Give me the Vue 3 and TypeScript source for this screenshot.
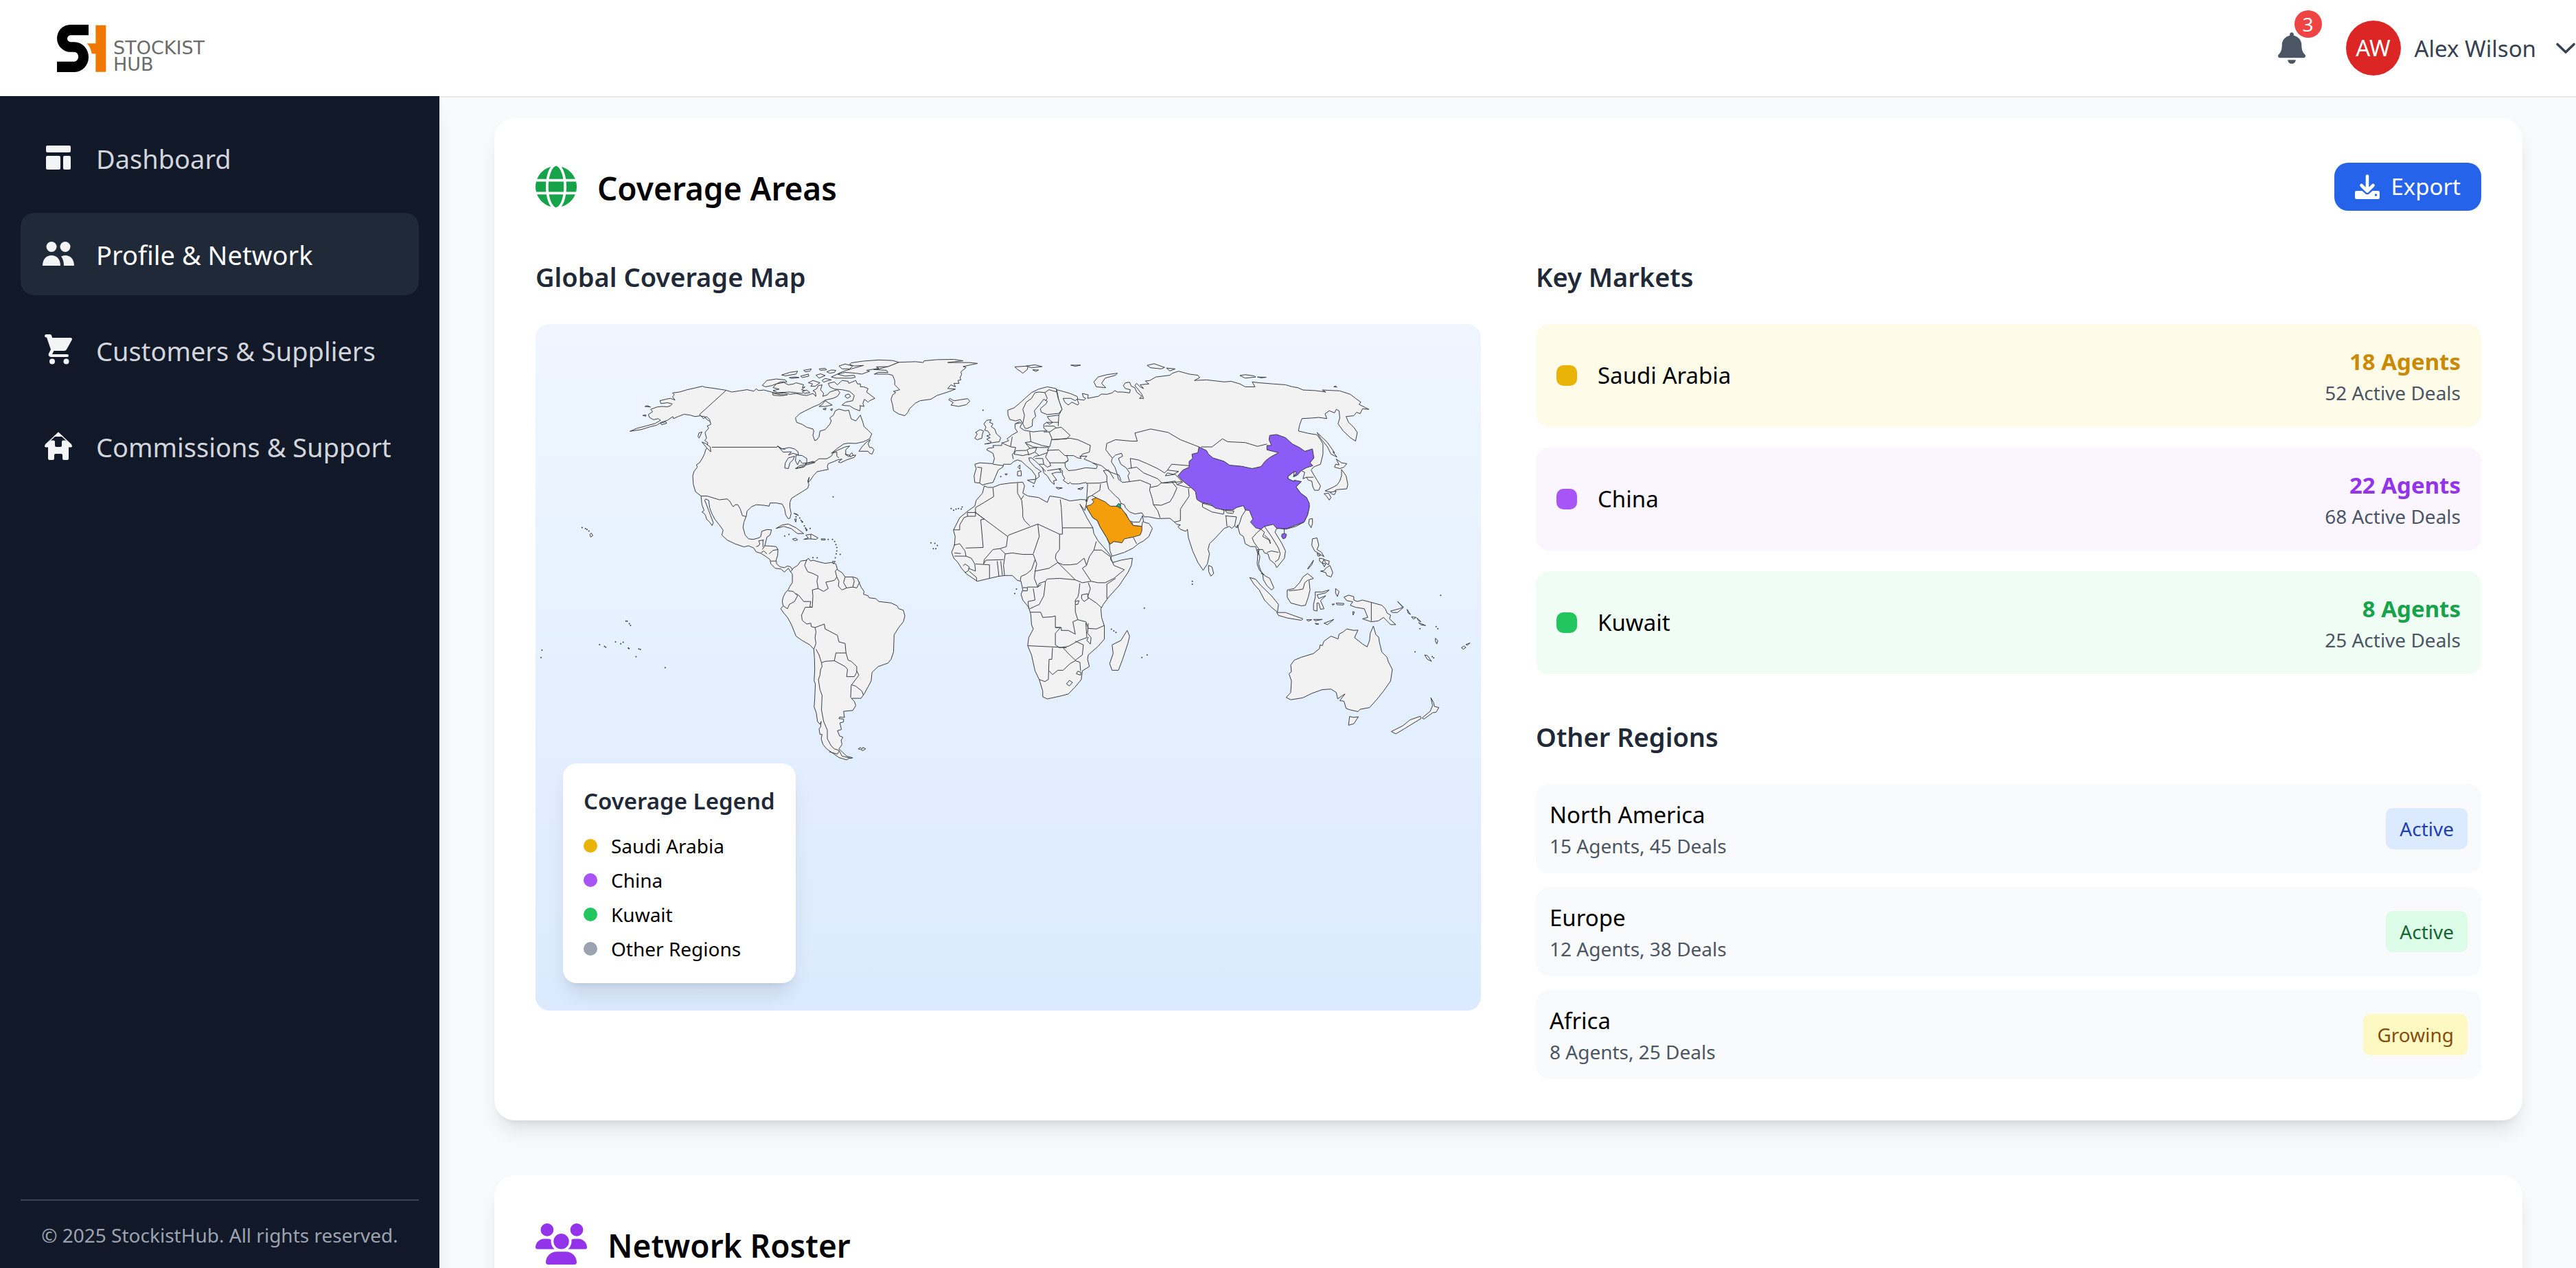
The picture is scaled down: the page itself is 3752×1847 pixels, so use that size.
<script setup lang="ts">
interface NavItem { label: string; icon: 'dashboard' | 'people' | 'cart' | 'house'; active?: boolean }
interface Market { name: string; agents: number; deals: number; tone: string }
interface Region { name: string; agents: number; deals: number; status: string; tone: string }

const nav: NavItem[] = [
  { label: 'Dashboard', icon: 'dashboard' },
  { label: 'Profile & Network', icon: 'people', active: true },
  { label: 'Customers & Suppliers', icon: 'cart' },
  { label: 'Commissions & Support', icon: 'house' },
]

const markets: Market[] = [
  { name: 'Saudi Arabia', agents: 18, deals: 52, tone: 'yellow' },
  { name: 'China', agents: 22, deals: 68, tone: 'purple' },
  { name: 'Kuwait', agents: 8, deals: 25, tone: 'green' },
]

const regions: Region[] = [
  { name: 'North America', agents: 15, deals: 45, status: 'Active', tone: 'blue' },
  { name: 'Europe', agents: 12, deals: 38, status: 'Active', tone: 'green' },
  { name: 'Africa', agents: 8, deals: 25, status: 'Growing', tone: 'yellow' },
]

const legend = [
  { label: 'Saudi Arabia', tone: 'yellow' },
  { label: 'China', tone: 'purple' },
  { label: 'Kuwait', tone: 'green' },
  { label: 'Other Regions', tone: 'gray' },
]

// Western hemisphere coastlines
const westLand: string[] = [
  // North and Central America
  '308,376 330,366 362,357 390,349 408,338 400,332 385,336 372,328 368,318 382,308 376,300 396,292 412,290 430,291 440,288 446,281 430,277 409,280 406,270 425,265 440,262 455,268 447,256 453,250 447,243 470,240 495,232 520,226 545,220 552,223 580,227 605,231 622,234 640,240 665,236 690,232 712,237 720,229 728,235 745,233 770,240 790,245 810,243 830,248 850,245 868,250 885,252 905,245 915,255 913,240 905,236 918,228 922,218 935,215 930,232 940,245 937,255 952,250 960,240 975,235 985,232 993,242 985,255 970,262 945,268 925,283 905,292 880,305 862,315 848,330 852,345 870,352 885,362 905,368 908,375 905,390 911,408 918,405 925,395 928,375 945,370 960,352 965,340 960,330 972,320 978,305 990,299 1010,305 1022,303 1025,315 1030,333 1045,340 1060,320 1068,345 1072,360 1085,372 1097,385 1090,402 1070,412 1045,418 1020,417 1005,420 985,435 965,452 985,442 1010,430 1025,427 1012,440 1012,455 1025,462 1045,458 1040,466 1015,475 995,485 988,482 1000,472 985,475 975,480 955,488 952,498 955,508 935,512 918,516 908,528 903,535 895,548 890,552 893,535 888,548 892,560 888,573 870,585 850,598 835,608 830,622 830,640 834,660 830,677 824,678 816,665 813,645 805,628 785,624 765,624 762,635 745,632 720,630 705,637 690,652 688,668 680,690 677,708 684,735 695,748 710,750 728,745 735,740 738,722 755,716 770,717 765,735 755,742 752,755 748,772 765,773 785,775 791,785 790,805 785,822 787,835 798,845 812,848 822,842 832,845 838,855 832,862 825,850 812,863 800,852 782,850 768,835 765,820 750,808 735,798 720,793 712,780 695,772 680,776 650,765 625,752 608,735 612,718 600,700 585,680 575,660 568,640 565,615 555,610 552,615 558,630 565,650 572,670 580,692 576,702 568,690 558,680 555,668 550,660 543,655 550,650 543,630 540,600 522,585 515,560 513,530 517,515 528,500 525,492 535,485 545,468 552,452 555,440 560,432 562,415 552,408 558,400 553,380 565,365 560,358 572,352 568,335 558,325 548,332 540,322 520,325 505,320 485,317 465,325 450,332 448,325 430,338 410,345 395,355 375,360 345,370',
  // South America
  '838,855 832,862 838,870 838,900 830,912 824,925 815,935 808,950 805,965 808,980 800,990 810,1005 822,1020 835,1045 850,1085 870,1100 895,1115 908,1130 910,1160 911,1200 909,1240 913,1250 911,1300 909,1330 916,1350 920,1380 928,1390 932,1380 930,1400 925,1405 928,1425 935,1425 932,1440 938,1460 950,1475 970,1490 990,1505 1015,1513 1022,1508 1035,1506 1015,1500 1000,1485 990,1475 1000,1460 997,1445 1003,1435 992,1430 985,1412 998,1408 993,1385 1005,1382 1005,1372 990,1370 992,1365 1008,1366 1005,1345 1035,1342 1045,1325 1040,1310 1030,1300 1050,1300 1062,1300 1072,1285 1085,1260 1095,1240 1098,1210 1118,1190 1150,1178 1160,1165 1168,1140 1170,1080 1185,1055 1200,1035 1205,1015 1200,995 1185,990 1180,980 1160,970 1120,965 1110,955 1088,952 1085,945 1070,940 1072,930 1062,915 1058,905 1050,885 1035,880 1010,880 1000,865 985,855 980,835 965,830 945,833 925,828 905,822 897,825 890,815 885,822 865,825 855,840 840,850',
  // Greenland
  '1105,178 1150,178 1165,182 1172,200 1172,215 1188,232 1168,238 1175,242 1165,250 1160,265 1165,285 1168,305 1185,316 1205,322 1215,310 1220,298 1240,278 1255,270 1290,265 1310,252 1345,240 1370,230 1345,228 1355,215 1370,222 1365,210 1382,210 1378,200 1388,198 1385,190 1390,180 1388,170 1405,155 1395,152 1420,146 1442,141 1415,138 1345,138 1395,132 1365,127 1310,128 1268,132 1265,138 1240,135 1185,137 1150,152 1120,160 1103,162 1145,165 1150,172 1118,172',
  // Ellesmere and Axel Heiberg
  '985,178 1010,172 1045,175 1065,178 1090,168 1080,165 1120,158 1112,153 1150,152 1185,137 1165,131 1120,129 1070,133 1030,139 1025,145 1040,150 1070,148 1030,160 1000,170',
  '990,150 1010,143 1035,150 1025,160 1000,160',
  // Baffin Island
  '955,210 975,205 985,215 1000,200 1020,203 1022,210 1045,200 1050,212 1060,212 1060,222 1070,222 1085,228 1080,240 1095,252 1107,262 1090,270 1085,275 1073,265 1068,280 1072,290 1058,287 1060,292 1058,305 1040,298 1025,288 1010,287 1000,285 1012,275 1035,270 1040,252 1025,238 1000,232 975,230 960,222',
  '1012,250 1022,247 1028,255 1018,262 1010,256',
  '925,290 935,283 945,270 960,280 968,285 945,290',
  '938,299 948,295 946,302', '962,300 969,298 966,305',
  // Arctic archipelago
  '740,217 755,200 785,195 815,198 820,205 800,205 785,212 770,218 750,222',
  '785,212 775,225 795,230 775,235 790,242 830,240 870,245 880,235 868,232 880,222 870,225 875,215 850,208 842,212 825,215 810,207',
  '773,244 800,249 822,250 800,253 775,251', '870,238 885,233 895,242 878,245',
  '803,181 830,172 855,168 850,178 815,184', '865,185 890,178 892,185 870,190',
  '875,165 900,160 895,168 880,170', '828,190 848,188 860,190 835,193',
  '915,182 930,177 945,183 925,192', '925,160 945,158 950,163 930,165', '950,170 965,164 980,165 975,172 960,175',
  '890,208 905,200 928,208 912,220 898,220 904,212', '935,200 945,193 965,198 950,202 940,206',
  '965,188 985,178 1010,185 1040,182 1043,189 1030,192 980,192',
  // Newfoundland and Pacific coast islands
  '1092,405 1078,415 1065,430 1055,445 1085,445 1090,452 1098,455 1104,440 1098,432 1090,432 1085,420',
  '543,413 555,418 570,430 572,447 560,435', '530,395 533,382 543,378 538,390 534,399',
  '407,348 425,343 428,348 412,353', '357,290 365,287 375,292', '350,321 360,319 360,324',
  '1010,455 1028,460 1022,464', '1025,458 1032,450 1036,458 1028,465',
  // Caribbean
  '785,712 805,700 825,697 850,710 875,730 855,730 845,722 835,713 810,705', '838,749 850,746 855,752 845,754',
  '882,735 900,732 922,745 915,750 895,748 875,750 890,745', '932,748 945,748 945,752 933,752',
  '843,660 852,662 858,668', '845,680 851,679 849,690', '865,682 873,690 868,688', '880,708 887,718 881,715', '969,826 978,826 972,835',
  // Hawaii, Iceland, Falklands
  '177,733 182,728 187,737 180,742', '1348,267 1352,262 1360,268 1368,270 1385,267 1410,263 1417,272 1405,284 1380,290 1355,285 1363,277',
  '1053,1475 1060,1470 1065,1476 1068,1470 1077,1475 1068,1481 1060,1477',
]

const westBorders: string[] = [
  '575,431 788,431 790,427 800,436 815,438', '622,234 535,318 540,324 552,325 556,332 568,342',
  '540,600 560,600 600,613 625,610 634,618 640,630 645,637 652,630 660,630 668,645 675,668 688,671',
  '850,505 880,495 885,487 910,482 925,471 950,471 965,462 972,450 983,448 983,462 990,468',
  '885,820 878,840 888,862 905,868 922,877 918,895 920,905 922,920', '922,920 940,930 955,920 947,898 975,892 983,880 978,860 985,852',
  '983,880 990,895 988,912 1000,925 1015,918 1005,900 1010,880', '1015,918 1035,915 1040,895 1035,882', '1035,915 1048,918 1058,897',
  '922,920 903,925 905,945 903,985 895,983 898,965 875,965 860,945 850,937', '824,928 840,930 855,945 845,965 828,975 822,990 808,980',
  '903,985 880,985 868,1012 870,1030 885,1043 898,1040 900,1052 912,1055 942,1043 945,1060 985,1082 990,1105 1010,1110 1013,1143 980,1143 975,1170 945,1172 933,1177 925,1150 915,1130',
  '912,1055 915,1070 912,1090 915,1110 908,1130', '975,1170 1010,1190 1018,1200 1015,1225 1040,1225 1048,1210 1048,1190 1030,1172 1020,1168 1013,1143',
  '1048,1205 1055,1220 1030,1255 1028,1298', '1030,1253 1045,1258 1065,1275 1070,1290',
  '933,1177 935,1190 930,1200 928,1220 923,1235 928,1270 935,1290 933,1340 940,1380 952,1410 952,1440 965,1465 975,1475 990,1480 1000,1500 1030,1508',
  '958,1485 985,1493 990,1483', '720,775 728,772 732,765 728,755 745,752', '742,752 742,776', '736,796 745,790 755,800', '748,772 740,785', '762,800 775,788 791,785', '768,825 785,825', '898,733 898,750',
]

const lakes: string[] = [
  '790,427 805,437 828,432 845,437 856,446 858,458 840,452 825,458 835,447 808,448', '845,462 825,468 815,485 813,503 825,505 830,485 840,475',
  '850,458 870,460 885,470 885,485 870,487 862,475 855,492 848,478', '848,505 862,495 885,490 875,500', '880,488 905,480 912,484 885,492',
]

// Eastern hemisphere coastlines
const eastLand: string[] = [
  // Eurasian mainland
  '92,555 78,553 76,530 82,505 78,490 92,485 130,488 134,470 130,452 112,440 115,435 132,432 130,425 140,425 155,425 155,417 165,413 175,408 170,402 185,388 200,378 193,365 193,350 205,343 212,350 207,362 218,372 245,378 265,375 285,375 275,365 275,352 283,345 292,352 300,345 290,335 285,325 318,320 327,300 318,270 312,232 330,238 350,245 370,255 372,262 365,270 352,262 330,262 335,275 345,285 355,275 372,285 375,280 370,265 390,268 395,262 388,258 385,245 402,250 400,262 430,255 440,247 455,248 470,243 478,235 485,240 500,240 520,243 522,232 508,228 502,218 508,208 520,206 525,220 535,225 540,240 555,255 548,262 560,262 555,248 545,232 535,218 540,210 550,222 560,228 550,215 575,212 565,202 578,200 595,188 635,182 642,175 660,168 690,178 715,182 720,190 705,200 740,198 790,205 810,203 835,212 850,222 878,222 870,205 890,208 930,212 965,215 985,222 1000,225 1015,233 1050,235 1080,240 1070,233 1120,236 1150,248 1165,262 1180,275 1175,283 1203,300 1185,298 1178,315 1168,310 1160,322 1138,325 1145,345 1160,362 1170,380 1165,410 1150,398 1130,375 1115,350 1120,330 1118,305 1110,300 1105,312 1090,305 1078,315 1083,332 1060,328 1040,330 1012,332 1005,355 1002,375 1030,383 1055,388 1065,405 1072,420 1072,455 1065,490 1050,497 1045,500 1038,510 1045,525 1055,545 1065,565 1060,580 1048,580 1043,568 1040,548 1030,545 1025,535 1015,540 1020,518 1010,512 998,528 988,533 990,515 972,532 972,540 990,550 1010,550 995,568 1008,590 1025,605 1033,635 1028,665 1018,690 995,705 965,715 950,712 940,712 935,725 955,765 965,790 962,815 940,848 935,835 920,820 915,800 905,797 900,785 885,785 892,810 888,835 895,860 905,875 920,885 932,918 925,925 912,910 902,890 900,870 890,855 884,835 886,800 880,775 865,775 850,765 845,740 835,732 832,720 828,700 825,710 820,702 812,712 805,705 790,712 780,725 765,745 748,765 744,785 748,800 742,835 730,857 715,830 700,790 688,745 685,715 680,722 665,715 658,706 665,700 655,698 648,690 635,677 600,678 575,672 562,672 555,658 535,662 520,655 508,640 505,630 495,625 490,643 510,662 518,685 530,690 548,690 557,668 560,690 575,695 585,712 575,740 560,755 545,765 530,780 505,795 470,808 464,790 462,765 455,745 435,705 428,685 415,675 400,645 395,635 398,600 400,560 395,553 375,558 355,558 350,553 345,558 330,545 335,540 328,525 328,512 318,505 325,518 310,518 305,520 298,522 312,545 303,547 305,560 295,550 285,530 275,520 272,505 265,495 250,478 240,468 232,468 235,480 250,500 268,515 260,520 262,533 252,542 252,530 240,510 225,495 212,480 200,475 190,480 180,490 160,490 158,500 145,510 138,530 130,553 110,558 100,562',
  // Scandinavia
  '222,366 215,350 208,335 195,340 178,335 173,320 172,303 190,295 205,280 225,258 240,242 260,230 285,222 310,228 312,240 316,262 327,300 318,314 285,318 268,310 265,298 282,280 285,272 275,265 262,285 248,305 252,325 243,335 242,358 228,366',
  // British Isles
  '106,420 120,418 125,412 120,410 112,403 122,398 112,392 122,388 115,375 106,372 110,362 104,350 112,338 125,336 120,345 130,350 125,360 135,368 140,385 152,398 148,412 130,415', '78,400 85,385 80,380 93,370 103,375 100,385 98,400 85,405',
  // Arctic Ocean islands
  '192,153 230,150 228,162 215,175 208,168 200,162', '225,150 250,146 270,152 240,156', '243,163 260,164 252,169', '352,147 380,147 365,151',
  '425,222 418,205 430,188 455,180 485,175 480,182 450,192 440,210 452,225', '570,148 590,142 620,155 610,160 580,156', '625,157 650,160 635,167', '835,183 850,180 875,184 880,188 850,192', '885,188 910,189 895,191', '1103,222 1108,219 1112,223',
  // Japan, Sakhalin, Taiwan
  '1055,380 1085,415 1105,450 1100,447 1112,465 1095,455 1085,430 1065,400', '1110,472 1125,485 1140,488 1132,500 1120,505 1105,500 1108,490 1118,492',
  '1125,508 1138,530 1143,560 1140,575 1110,578 1100,588 1078,582 1100,570 1112,562 1120,548 1125,530', '1075,592 1088,590 1095,605 1090,614 1082,600', '1093,588 1110,582 1105,595 1097,593', '1033,680 1042,678 1042,695 1038,710 1031,695',
  // Philippines
  '1042,748 1055,745 1060,770 1055,785 1068,795 1075,810 1060,798 1048,790 1040,770', '1065,860 1075,858 1080,850 1092,840 1100,865 1095,880 1083,875 1080,865', '1062,815 1075,818 1070,832 1062,825', '1075,820 1090,825 1088,838 1080,832', '1070,832 1080,835 1076,845', '1028,852 1045,822 1040,838 1030,852', '1055,798 1065,806 1058,808',
  // South and South-East Asian islands
  '745,840 755,845 760,868 752,877 746,862', '863,882 880,888 895,910 925,945 945,975 942,1002 925,985 905,960 890,925 875,905',
  '940,1003 965,1003 985,1012 1015,1025 1010,1030 970,1022 945,1013', '970,925 990,920 1005,900 1015,880 1028,868 1045,885 1032,890 1035,925 1030,950 1022,978 1010,980 980,970 970,950',
  '1050,932 1070,932 1090,925 1080,935 1055,942 1060,955 1080,945 1065,962 1075,990 1065,992 1060,970 1055,970 1055,998 1045,995 1045,975 1050,950', '1025,1028 1040,1028 1030,1033', '1045,1027 1070,1027 1050,1032', '1075,1040 1103,1027 1085,1045', '1050,1040 1060,1043 1052,1044', '1108,920 1118,930 1113,948 1108,935', '1110,970 1132,972 1130,977 1112,976', '1098,974 1105,974 1100,978', '1157,1000 1162,1002 1158,1012',
  // New Guinea and Melanesia
  '1132,950 1145,943 1160,948 1160,960 1170,965 1185,960 1210,968 1240,978 1250,990 1255,1005 1265,1012 1262,1025 1280,1045 1265,1045 1245,1020 1230,1032 1210,1035 1185,1025 1200,1020 1190,990 1165,985 1150,978 1157,966 1140,962', '1265,998 1290,990 1300,985 1285,965 1302,985 1285,1003 1270,1003', '1312,992 1322,1010 1315,1005', '1325,1018 1338,1020 1330,1026', '1340,1022 1352,1035 1345,1032', '1345,1038 1365,1048 1352,1046', '1393,1092 1400,1100 1397,1112 1393,1102', '1362,1150 1370,1152 1382,1172 1370,1165', '1467,1125 1475,1119 1480,1124 1473,1130', '1480,1114 1492,1108 1485,1116',
  // Australia, Tasmania, New Zealand
  '990,1168 1010,1158 1045,1145 1062,1128 1064,1115 1070,1118 1075,1102 1095,1085 1110,1092 1115,1095 1118,1078 1130,1070 1140,1060 1160,1065 1172,1064 1162,1090 1185,1112 1198,1122 1205,1100 1207,1075 1216,1050 1223,1080 1231,1088 1233,1105 1240,1140 1255,1158 1258,1172 1270,1200 1265,1240 1245,1275 1225,1305 1205,1332 1178,1338 1172,1346 1150,1340 1138,1335 1132,1310 1120,1308 1135,1285 1128,1290 1114,1302 1110,1280 1095,1268 1070,1270 1040,1283 1015,1298 980,1305 967,1297 980,1280 982,1240 975,1215 982,1208 980,1185', '1148,1363 1160,1366 1173,1364 1160,1388 1145,1393',
  '1380,1298 1388,1315 1390,1328 1403,1332 1395,1348 1385,1350 1360,1372 1355,1368 1378,1345 1385,1325', '1350,1362 1352,1370 1325,1390 1305,1405 1280,1423 1267,1415 1300,1395 1320,1375',
  // Africa and Madagascar
  '105,565 115,570 130,570 150,560 180,555 215,552 220,565 215,590 230,600 260,605 285,622 292,600 320,605 350,617 380,612 395,613 397,625 392,650 378,628 398,675 415,710 418,730 430,755 455,790 468,810 465,818 472,830 495,822 528,815 525,840 515,865 490,910 460,950 445,975 438,990 440,1020 448,1050 448,1095 430,1120 402,1150 400,1165 405,1190 385,1205 382,1235 365,1260 345,1285 320,1293 285,1302 272,1295 272,1275 262,1235 250,1205 240,1150 229,1118 232,1090 245,1060 240,1045 238,1010 232,985 215,960 210,940 215,925 210,895 200,892 185,875 165,875 145,878 120,885 85,895 55,870 40,850 30,830 18,815 12,795 20,770 22,740 17,718 35,675 60,650 78,635 82,615 100,590',
  '513,1065 520,1085 515,1110 500,1165 488,1203 470,1203 463,1180 473,1145 470,1115 495,1100',
  // Mediterranean islands
  '200,515 210,512 211,530 200,530', '201,500 207,492 207,507', '228,545 252,542 248,557', '310,570 328,572 316,576', '372,575 388,570 382,578', '164,524 171,523 168,528',
]

const eastBorders: string[] = [
  // North and West Africa
  '130,572 132,602 105,622 80,640 80,657 57,657 57,670 47,675 35,700 35,717 17,717', '80,655 80,670 57,670', '78,655 105,680 95,682 102,778 52,780', '80,657 172,740 175,735 258,697 262,740 245,800',
  '200,555 200,590 212,615 215,650 215,672 220,685 235,703', '218,598 210,612', '322,612 325,640 328,710 416,710', '328,710 328,732 320,732 258,697',
  '172,740 168,775 150,782 130,785 105,820 103,835', '150,782 165,800 185,797 215,802 245,802', '18,770 35,765 50,790 53,808 20,808', '20,797 38,799', '53,808 68,815 78,835 80,860 60,850', '45,842 50,835 62,845 60,858 50,865', '62,860 83,882 83,895', '80,835 120,838 120,885', '103,835 110,822 160,820', '142,825 147,878', '152,825 157,875', '165,800 160,840 163,875',
  // Central and East Africa
  '320,732 320,785 310,800 308,815 315,830', '245,802 255,835 250,860 290,850 315,830', '250,820 240,855 225,870 210,878 208,893', '250,860 248,885 258,915', '258,915 262,902 280,895 285,887 320,885 365,890 340,860 315,830', '315,830 330,838 350,838 370,835 390,815 397,840 385,850 410,895 385,900 365,890', '397,840 405,810 418,787 440,787 465,810 470,825 475,840 505,855 475,885 450,900 430,900 410,895', '480,885 455,905 455,955', '418,787 425,757', '400,950 425,970 440,987', '402,900 408,920 400,950', '372,950 375,935 378,902',
  '280,895 275,945 262,975 235,990', '236,1002 266,1002 272,1020 298,1018 308,1015 308,1055 325,1055 325,1065 345,1065 365,1078 362,1060 358,1035 372,1028 365,1000 365,960 372,950', '215,917 228,917 228,928 215,928', '228,915 258,915 268,905', '245,920 250,960 230,965 232,990', '364,965 376,962 372,975 366,975', '372,1028 395,1035 402,1058 425,1060 448,1048', '383,942 400,938 402,955 390,965 383,955 383,942',
  // Southern Africa
  '308,1055 323,1055 308,1075 308,1115 320,1125 345,1120 375,1100 398,1090 395,1040', '230,1118 300,1122 340,1125', '402,1040 400,1075 410,1090 408,1112 398,1100 402,1088', '330,1125 345,1145 365,1168 385,1150 388,1115 365,1102', '300,1125 298,1165 290,1165 288,1235 278,1242 262,1235', '290,1205 300,1218 315,1203 330,1203 350,1180 365,1170 378,1175 380,1205', '340,1250 348,1238 357,1245 348,1257 340,1250', '368,1215 372,1206 381,1210 380,1220 368,1215',
  // Europe
  '85,500 98,502 92,555', '130,490 160,495', '155,415 162,420 182,430 195,432 190,450 185,455 188,472', '185,395 183,408 180,430', '235,378 238,412 222,415 235,435 225,442 195,443', '195,443 190,455 215,460 232,455 228,442', '290,378 298,400 292,430 270,425 238,412', '225,418 245,430 262,432 288,432', '275,378 292,378 308,365 325,362 350,390 340,402 298,405', '278,358 305,358 310,365', '283,345 318,345', '195,350 207,347', '318,320 316,358', '298,405 350,400 372,405 408,425 405,448 385,455 380,465', '290,432 285,442 318,440 335,460 345,460', '235,435 255,432 250,448 230,458', '250,448 262,460 285,450 288,440', '262,460 250,462 245,468', '285,450 280,465 292,485 335,485 345,478', '250,470 272,470 275,490 262,490', '275,490 285,500 295,495 292,485', '270,500 280,515', '285,512 325,505', '215,350 220,320 215,300 225,275 240,262 250,242 262,240 278,242', '278,242 285,262 280,270', '278,242 290,232 312,240',
  // Western and Central Asia
  '470,468 452,440 455,418 480,405 525,410 542,410 535,382 580,368 630,380 665,405 718,430', '460,515 490,528 495,545', '525,505 522,470 545,475 570,488 600,505 620,520 628,510 640,490 690,495', '515,505 540,500 560,520 600,540 612,555', '628,510 660,515 645,525 628,520 622,530 650,525 670,550 625,555 612,555', '520,550 550,545 580,560 577,580 585,610 588,630 600,650 607,675', '580,570 600,565 610,555 640,550 650,548 655,560 672,552', '640,550 655,572 645,600 635,620 610,632 588,630', '655,560 690,572 695,570', '688,575 690,600 665,645 665,685 648,690', '396,556 435,555 455,550 460,575 480,600 490,610 495,625', '437,558 435,580 412,598 400,605', '412,598 425,606', '398,620 402,602', '455,550 455,530 445,512', '415,485 440,495 460,515', '445,512 460,510 475,540', '526,690 530,702 555,705 557,688', '530,742 540,765', '464,767 475,757 498,760',
  // South and East Asia
  '728,625 760,635 790,650 788,663 755,655 728,638 728,625', '793,650 818,652 815,660 798,658 793,650', '793,668 805,670 825,672 820,702', '795,668 798,705', '855,642 840,670 835,690 828,710', '895,715 885,725 870,745 875,760 890,785 886,805', '895,715 905,725 900,740 918,752 922,765 920,752 905,735', '905,705 925,740 945,780 950,800 945,820 935,828', '912,795 925,790 945,795', '724,430 755,430 785,402 800,412 850,415 885,428 912,420', '1025,535 1045,535', '895,868 905,872', '975,928 1000,925 1015,922 1020,900 1030,890', '1210,968 1210,1033',
]

const seas: string[] = [
  '470,470 480,458 497,452 500,462 488,470 495,490 510,502 520,520 515,530 520,550 500,553 488,542 485,525 478,500 468,482',
  '337,500 335,485 345,475 340,460 360,460 372,468 382,470 378,462 398,462 390,472 410,482 428,495 425,505 395,502 365,510 345,512',
]

// Islands too small for an outline, one point each
const westIslets: string[] = [
  '152,709', '163,713', '168,716', '174,721', '295,1033', '299,1033', '306,1042', '310,1048', '209,1114', '225,1120', '229,1123', '261,1105', '278,1111', '286,1106', '303,1126', '305,1128', '337,1129', '342,1131', '328,1156', '423,1194', '21,1133', '18,1159', '971,603', '850,672', '862,676', '870,690', '877,703', '896,712', '884,719', '813,738', '827,733', '955,750', '969,750', '976,757', '980,768', '983,778', '983,790', '981,800', '994,802', '978,814', '905,813', '919,814', '1356,643', '1364,649', '1372,645', '1380,643', '1389,645', '1392,638', '1290,762', '1303,764', '1311,771', '1298,782', '1306,782', '1460,303',
]
const eastIslets: string[] = [
  '192,937', '197,922', '699,895', '699,905', '562,988', '468,1061', '475,1067', '481,1072', '555,1159', '570,1150', '1408,944', '1335,1139', '1395,1052', '1400,1059', '1349,1059', '1384,1156', '1388,1160', '152,533', '245,566',
]

const china = '718,430 740,443 745,455 758,468 790,480 805,493 840,497 870,505 895,498 908,478 922,465 945,450 912,440 912,425 925,425 918,405 920,390 940,387 965,398 985,420 1005,432 1020,445 1042,437 1046,468 1035,485 1043,495 1025,502 1010,512 998,528 988,533 997,518 990,515 972,532 972,540 990,550 990,545 1010,550 995,568 1008,590 1025,605 1033,625 1033,640 1028,665 1018,690 985,705 968,713 950,712 940,712 930,698 905,705 895,715 880,710 865,690 872,680 862,650 850,648 845,633 825,640 815,648 790,648 765,642 750,628 725,622 712,612 708,585 695,570 672,548 658,530 672,510 690,500 690,480 700,470 698,455 715,450'
const hainan = '955,732 962,729 968,733 965,745 958,748 954,740'
const saudi = '412,612 425,606 450,620 465,635 485,635 495,640 510,665 520,685 530,702 555,705 555,720 550,735 530,742 505,748 498,762 475,757 464,767 455,745 435,705 428,685 415,675 400,645 397,635 410,630 418,620'
const kuwait = '482,635 488,626 494,629 494,643 488,638'
</script>

<template>
  <div class="app">
    <header class="topbar">
      <a class="brand" href="#" aria-label="Stockist Hub">
        <svg class="brand-mark" viewBox="0 0 216 207" aria-hidden="true">
          <path d="M138 0H58a58 59.500 0 0 0 0 119H76a17 20.500 0 0 1 0 42H0v46H77a61 65.500 0 0 0 0-131H60a15 15 0 0 1 0-30h78z" fill="#000" />
          <path d="M169 2h45v204h-45v-79h-17q-4-26-21-45h38z" fill="#f07800" />
        </svg>
        <span class="brand-name"><span>STOCKIST</span><span>HUB</span></span>
      </a>
      <div class="account">
        <button class="bell" type="button" aria-label="Notifications">
          <svg viewBox="0 0 448 512" aria-hidden="true"><path fill="currentColor" d="M224 512c35.320 0 63.970-28.650 63.970-64H160.030c0 35.350 28.650 64 63.970 64zm215.390-149.710c-19.320-20.760-55.470-51.990-55.470-154.290 0-77.700-54.480-139.900-127.940-155.160V32c0-17.670-14.320-32-31.980-32s-31.980 14.330-31.980 32v20.840C118.560 68.100 64.080 130.300 64.080 208c0 102.300-36.150 133.530-55.470 154.290-6 6.450-8.660 14.160-8.610 21.710.11 16.400 12.980 32 32.100 32h383.800c19.120 0 32-15.600 32.100-32 .05-7.550-2.610-15.270-8.610-21.710z" /></svg>
          <span class="count">3</span>
        </button>
        <button class="user" type="button">
          <span class="avatar">AW</span>
          <span class="user-name">Alex Wilson</span>
          <svg class="chevron" viewBox="0 0 30 30" aria-hidden="true"><path d="M3 9.500 15 21 27 9.500" fill="none" stroke="currentColor" stroke-width="3.600" stroke-linecap="round" stroke-linejoin="round" /></svg>
        </button>
      </div>
    </header>

    <div class="body">
      <aside class="sidebar">
        <nav>
          <a v-for="item in nav" :key="item.label" href="#" class="nav-item" :class="{ active: item.active }">
            <svg class="nav-icon" viewBox="0 0 50 50" fill="#f3f4f6" aria-hidden="true">
              <template v-if="item.icon === 'dashboard'">
                <rect x="7" y="7" width="36" height="10" rx="2" />
                <rect x="7" y="22" width="21" height="20" rx="2" />
                <rect x="32" y="22" width="11" height="20" rx="2" />
              </template>
              <template v-else-if="item.icon === 'people'">
                <circle cx="15" cy="14.500" r="7.500" />
                <circle cx="35" cy="14.500" r="7.500" />
                <path d="M2 42C2 32 8 27 15 27s13 5 13 15z" />
                <path d="M29 28.500C31 27.500 33 27 35 27c7 0 13 5 13 15H33C33 36 31.500 31.500 29 28.500z" />
              </template>
              <template v-else-if="item.icon === 'cart'">
                <path d="M7 2h6q1.500 0 2 1.500L16.200 7H43q3 .5 1.500 3.500L37 24q-1.200 2-3.500 2H18.500L16 31h22q2 0 2 2t-2 2H14q-4.500-1-3-5l3-6L8 6.500H7Q5 6 5 4.200T7 2z" />
                <circle cx="16" cy="41.500" r="4" />
                <circle cx="36.500" cy="41.500" r="4" />
              </template>
              <template v-else>
                <path d="M25 4.500 32 11 H18z" />
                <path d="M6 23 25 5.500 44 23" fill="none" stroke="#f3f4f6" stroke-width="1.500" />
                <path d="M10 19.500 14.500 16.500H18q2 0 2 2V24q0 2 2 2h6q2 0 2-2v-5.500q0-2 2-2h3.500L40 19.500 45 24q.5 2-1.500 2.500H40V43q0 2-2 2h-5q-2 0-2-2v-5q0-2-2-2h-8q-2 0-2 2v5q0 2-2 2h-5q-2 0-2-2V26.500H6.500Q4.500 26 5 24z" />
              </template>
            </svg>
            <span class="nav-label">{{ item.label }}</span>
          </a>
        </nav>
        <footer class="copyright">© 2025 StockistHub. All rights reserved.</footer>
      </aside>

      <main class="content">
        <section class="card">
          <div class="card-head">
            <h2>
              <svg class="globe" viewBox="0 0 512 512" aria-hidden="true"><path fill="currentColor" d="M352 256c0 22.200-1.200 43.600-3.300 64H163.300c-2.200-20.400-3.300-41.800-3.300-64s1.200-43.600 3.300-64H348.700c2.200 20.400 3.300 41.800 3.300 64zm28.800-64H503.900c5.300 20.500 8.100 41.900 8.100 64s-2.800 43.500-8.100 64H380.800c2.100-20.600 3.200-42 3.200-64s-1.100-43.400-3.200-64zm112.600-32H376.700c-10-63.900-29.800-117.400-55.300-151.600c78.300 20.700 142 77.500 171.900 151.600zm-149.100 0H167.700c6.100-36.400 15.500-68.600 27-94.700c10.500-23.600 22.200-40.700 33.500-51.500C239.400 3.200 248.700 0 256 0s16.600 3.200 27.800 13.800c11.300 10.800 23 27.900 33.500 51.500c11.600 26 20.900 58.200 27 94.700zm-209 0H18.600C48.600 85.900 112.200 29.100 190.600 8.400C165.100 42.600 145.300 96.100 135.300 160zM8.100 192H131.200c-2.100 20.600-3.200 42-3.200 64s1.100 43.400 3.200 64H8.100C2.800 299.500 0 278.100 0 256s2.800-43.500 8.100-64zM194.700 446.600c-11.600-26-20.900-58.200-27-94.600H344.300c-6.100 36.400-15.500 68.600-27 94.600c-10.500 23.600-22.200 40.700-33.500 51.500C272.600 508.800 263.300 512 256 512s-16.600-3.200-27.800-13.800c-11.300-10.800-23-27.900-33.500-51.500zM135.300 352c10 63.900 29.800 117.400 55.300 151.600C112.200 482.900 48.600 426.100 18.600 352H135.300zm358.100 0c-30 74.100-93.600 130.900-171.900 151.600c25.500-34.200 45.200-87.700 55.300-151.600H493.400z" /></svg>
              <span>Coverage Areas</span>
            </h2>
            <button class="export" type="button">
              <svg viewBox="0 0 36 36" aria-hidden="true">
                <path d="M18 2.500V24M9.500 16 18 24.500 26.500 16" fill="none" stroke="#fff" stroke-width="4.600" stroke-linecap="round" stroke-linejoin="round" />
                <path fill="#fff" fill-rule="evenodd" d="M2 24h8.500l4.500 4q3 2.500 6 0l4.500-4H34q2 0 2 2v8q0 2-2 2H2q-2 0-2-2v-8q0-2 2-2zm28.500 4.200a1.800 1.800 0 1 0 0 3.600 1.800 1.800 0 0 0 0-3.600z" />
              </svg>
              <span>Export</span>
            </button>
          </div>

          <div class="columns">
            <div>
              <h3>Global Coverage Map</h3>
              <div class="map">
                <svg class="world" viewBox="0 0 1377 1000" role="img" aria-label="World map of coverage">
                  <g class="land" transform="matrix(.44643 0 0 .42091 0 -2)">
                    <polygon v-for="p in westLand" :key="p" :points="p" />
                    <polygon v-for="p in lakes" :key="p" class="water" :points="p" />
                    <polyline v-for="p in westBorders" :key="p" class="line" :points="p" />
                    <polyline v-for="p in westIslets" :key="p" class="islet" :points="p + ' ' + p" />
                  </g>
                  <g class="land" transform="matrix(.5102 0 0 .42091 600 -2)">
                    <polygon v-for="p in eastLand" :key="p" :points="p" />
                    <polygon v-for="p in seas" :key="p" class="water" :points="p" />
                    <polyline v-for="p in eastBorders" :key="p" class="line" :points="p" />
                    <polyline v-for="p in eastIslets" :key="p" class="islet" :points="p + ' ' + p" />
                    <polyline class="line" points="961,713 962,729" />
                    <polygon class="china" :points="china" />
                    <polygon class="china" :points="hainan" />
                    <polygon class="saudi" :points="saudi" />
                    <polygon class="kuwait" :points="kuwait" />
                  </g>
                </svg>
                <div class="legend">
                  <h4>Coverage Legend</h4>
                  <ul>
                    <li v-for="row in legend" :key="row.label"><span class="dot" :class="row.tone"></span>{{ row.label }}</li>
                  </ul>
                </div>
              </div>
            </div>

            <div>
              <h3>Key Markets</h3>
              <ul class="markets">
                <li v-for="m in markets" :key="m.name" :class="m.tone">
                  <span class="swatch"></span>
                  <span class="name">{{ m.name }}</span>
                  <div class="figures">
                    <strong>{{ m.agents }} Agents</strong>
                    <small>{{ m.deals }} Active Deals</small>
                  </div>
                </li>
              </ul>
              <h3 class="later">Other Regions</h3>
              <ul class="regions">
                <li v-for="r in regions" :key="r.name">
                  <div>
                    <span class="name">{{ r.name }}</span>
                    <small>{{ r.agents }} Agents, {{ r.deals }} Deals</small>
                  </div>
                  <span class="badge" :class="r.tone">{{ r.status }}</span>
                </li>
              </ul>
            </div>
          </div>
        </section>

        <section class="card">
          <div class="card-head">
            <h2>
              <svg class="users" viewBox="0 0 640 512" aria-hidden="true"><path fill="currentColor" d="M144 0a80 80 0 1 1 0 160A80 80 0 1 1 144 0zM512 0a80 80 0 1 1 0 160A80 80 0 1 1 512 0zM0 298.700C0 239.800 47.800 192 106.700 192h42.700c15.900 0 31 3.500 44.600 9.700c-1.300 7.200-1.900 14.700-1.900 22.300c0 38.200 16.800 72.500 43.300 96c-.2 0-.4 0-.7 0H21.300C9.600 320 0 310.400 0 298.700zM405.300 320c-.2 0-.4 0-.7 0c26.600-23.500 43.300-57.800 43.300-96c0-7.600-.7-15-1.900-22.300c13.600-6.300 28.700-9.700 44.600-9.700h42.700C592.200 192 640 239.800 640 298.700c0 11.800-9.600 21.300-21.300 21.300H405.300zM224 224a96 96 0 1 1 192 0 96 96 0 1 1 -192 0zM128 485.300C128 411.700 187.700 352 261.300 352H378.700C452.300 352 512 411.700 512 485.300c0 14.700-11.900 26.700-26.700 26.700H154.700c-14.700 0-26.700-11.900-26.700-26.700z" /></svg>
              <span>Network Roster</span>
            </h2>
          </div>
        </section>
      </main>
    </div>
  </div>
</template>

<style>
body {
  margin: 0;
  background: #f9fafb;
}
</style>

<style scoped>
.app {
  height: 100vh;
  display: flex;
  flex-direction: column;
  overflow: hidden;
  font-family: "Noto Sans", "Open Sans", sans-serif;
  font-size: 33px;
  line-height: 50px;
  color: #000;
}
h2, h3, h4, ul { margin: 0; padding: 0; }
ul { list-style: none; }
a { color: inherit; text-decoration: none; }
button { font: inherit; border: 0; padding: 0; background: none; color: inherit; cursor: pointer; }
svg { display: block; flex: none; }
small { display: block; font-size: 28px; line-height: 40px; color: #4b5563; }

.topbar {
  flex: none;
  height: 140px;
  display: flex;
  align-items: center;
  justify-content: space-between;
  padding-left: 83px;
  background: #fff;
}
.brand { display: flex; align-items: center; gap: 10px; }
.brand-mark { width: 72px; height: 69px; }
.brand-name {
  display: flex;
  flex-direction: column;
  padding-top: 24px;
  font-family: "DejaVu Sans", sans-serif;
  font-size: 27px;
  line-height: 24px;
  color: #6b6b6b;
}
.account { display: flex; align-items: center; gap: 59px; color: #374151; }
.bell { position: relative; color: #4b5563; }
.bell svg { width: 40px; height: 46px; }
.count {
  position: absolute;
  top: -32px;
  right: -24px;
  width: 40px;
  height: 40px;
  border-radius: 50%;
  background: #ef4444;
  color: #fff;
  font-size: 28px;
  line-height: 40px;
  text-align: center;
}
.user { display: flex; align-items: center; gap: 20px; }
.avatar {
  width: 80px;
  height: 80px;
  border-radius: 50%;
  background: #dc2626;
  color: #fff;
  line-height: 80px;
  text-align: center;
}
.user-name, .nav-label { padding-top: 2px; }
.chevron { width: 30px; height: 30px; margin-left: 8px; }

.body { flex: 1; min-height: 0; display: flex; }
.sidebar {
  position: relative;
  flex: none;
  width: 580px;
  display: flex;
  flex-direction: column;
  justify-content: space-between;
  padding: 30px 30px 28px;
  background: #111827;
  box-shadow: 0 20px 30px -6px rgba(0, 0, 0, .1);
}
nav { display: flex; flex-direction: column; gap: 20px; }
.nav-item {
  display: flex;
  align-items: center;
  gap: 30px;
  height: 120px;
  padding: 0 30px;
  border-radius: 20px;
  font-size: 38px;
  color: #d1d5db;
}
.nav-item.active { background: #1f2937; color: #fff; }
.nav-icon { width: 50px; height: 50px; }
.copyright {
  border-top: 2px solid #374151;
  padding-top: 30px;
  font-size: 28px;
  line-height: 40px;
  text-align: center;
  color: #9ca3af;
}

.content {
  flex: 1;
  min-width: 0;
  overflow: hidden;
  display: flex;
  flex-direction: column;
  gap: 80px;
  padding: 30px 78px 0 80px;
  border-top: 2px solid #e5e7eb;
}
.card {
  flex: none;
  padding: 60px;
  border-radius: 30px;
  background: #fff;
  box-shadow: 0 20px 30px -6px rgba(0, 0, 0, .1), 0 8px 12px -8px rgba(0, 0, 0, .1);
}
.card-head { display: flex; align-items: center; justify-content: space-between; }
h2 {
  display: flex;
  align-items: center;
  gap: 30px;
  height: 80px;
  font-size: 46px;
  line-height: 60px;
  font-weight: 600;
}
h2 span { padding-top: 4px; }
.globe { width: 60px; height: 60px; color: #16a34a; }
.users { width: 75px; height: 60px; color: #9333ea; }
.export {
  display: flex;
  align-items: center;
  gap: 16px;
  height: 70px;
  padding: 0 30px;
  border-radius: 20px;
  background: #2563eb;
  color: #fff;
}
.export svg { width: 36px; height: 36px; }

.columns {
  display: grid;
  grid-template-columns: 1fr 1fr;
  gap: 80px;
  align-items: start;
  margin-top: 60px;
}
h3 { margin-bottom: 38px; font-size: 38px; line-height: 62px; font-weight: 600; color: #1f2937; }
.later { margin-top: 60px; }

.map {
  position: relative;
  border-radius: 20px;
  overflow: hidden;
  background: linear-gradient(#eff6ff, #dbeafe);
}
.world { width: 100%; height: 1000px; }
.land { fill: #f2f2f2; stroke: #3a3d42; stroke-width: 1; stroke-linejoin: round; }
.land > * { vector-effect: non-scaling-stroke; }
.land .water { fill: #ebf3fe; }
.land .line { fill: none; }
.land .islet { fill: none; stroke-width: 2; stroke-linecap: round; }
.land .china { fill: #8b5cf6; }
.land .saudi { fill: #f59e0b; }
.land .kuwait { fill: #10b981; }

.legend {
  position: absolute;
  left: 40px;
  bottom: 40px;
  padding: 30px;
  border-radius: 20px;
  background: #fff;
  box-shadow: 0 20px 30px -6px rgba(0, 0, 0, .1), 0 8px 12px -8px rgba(0, 0, 0, .1);
}
h4 { margin-bottom: 20px; font-size: 33px; line-height: 50px; font-weight: 600; color: #1f2937; }
.legend ul { display: flex; flex-direction: column; gap: 10px; }
.legend li { display: flex; align-items: center; gap: 20px; font-size: 28px; line-height: 40px; }
.dot { width: 20px; height: 20px; border-radius: 50%; }
.dot.yellow, .yellow .swatch { background: #eab308; }
.dot.purple, .purple .swatch { background: #a855f7; }
.dot.green, .green .swatch { background: #22c55e; }
.dot.gray { background: #9ca3af; }

.markets { display: flex; flex-direction: column; gap: 30px; }
.markets li { display: flex; align-items: center; gap: 30px; padding: 30px; border-radius: 20px; }
.markets .yellow { background: #fefce8; }
.markets .purple { background: #faf5ff; }
.markets .green { background: #f0fdf4; }
.swatch { width: 30px; height: 30px; border-radius: 10px; }
.figures { margin-left: auto; text-align: right; }
.figures strong { display: block; font-weight: 700; }
.yellow strong { color: #ca8a04; }
.purple strong { color: #9333ea; }
.green strong { color: #16a34a; }

.regions { display: flex; flex-direction: column; gap: 20px; }
.regions li {
  display: flex;
  align-items: center;
  justify-content: space-between;
  padding: 20px;
  border-radius: 20px;
  background: #f9fafb;
}
.name { display: block; }
.badge { padding: 10px 20px; border-radius: 10px; font-size: 28px; line-height: 40px; }
.badge.blue { background: #dbeafe; color: #1e40af; }
.badge.green { background: #dcfce7; color: #166534; }
.badge.yellow { background: #fef9c3; color: #854d0e; }
</style>
